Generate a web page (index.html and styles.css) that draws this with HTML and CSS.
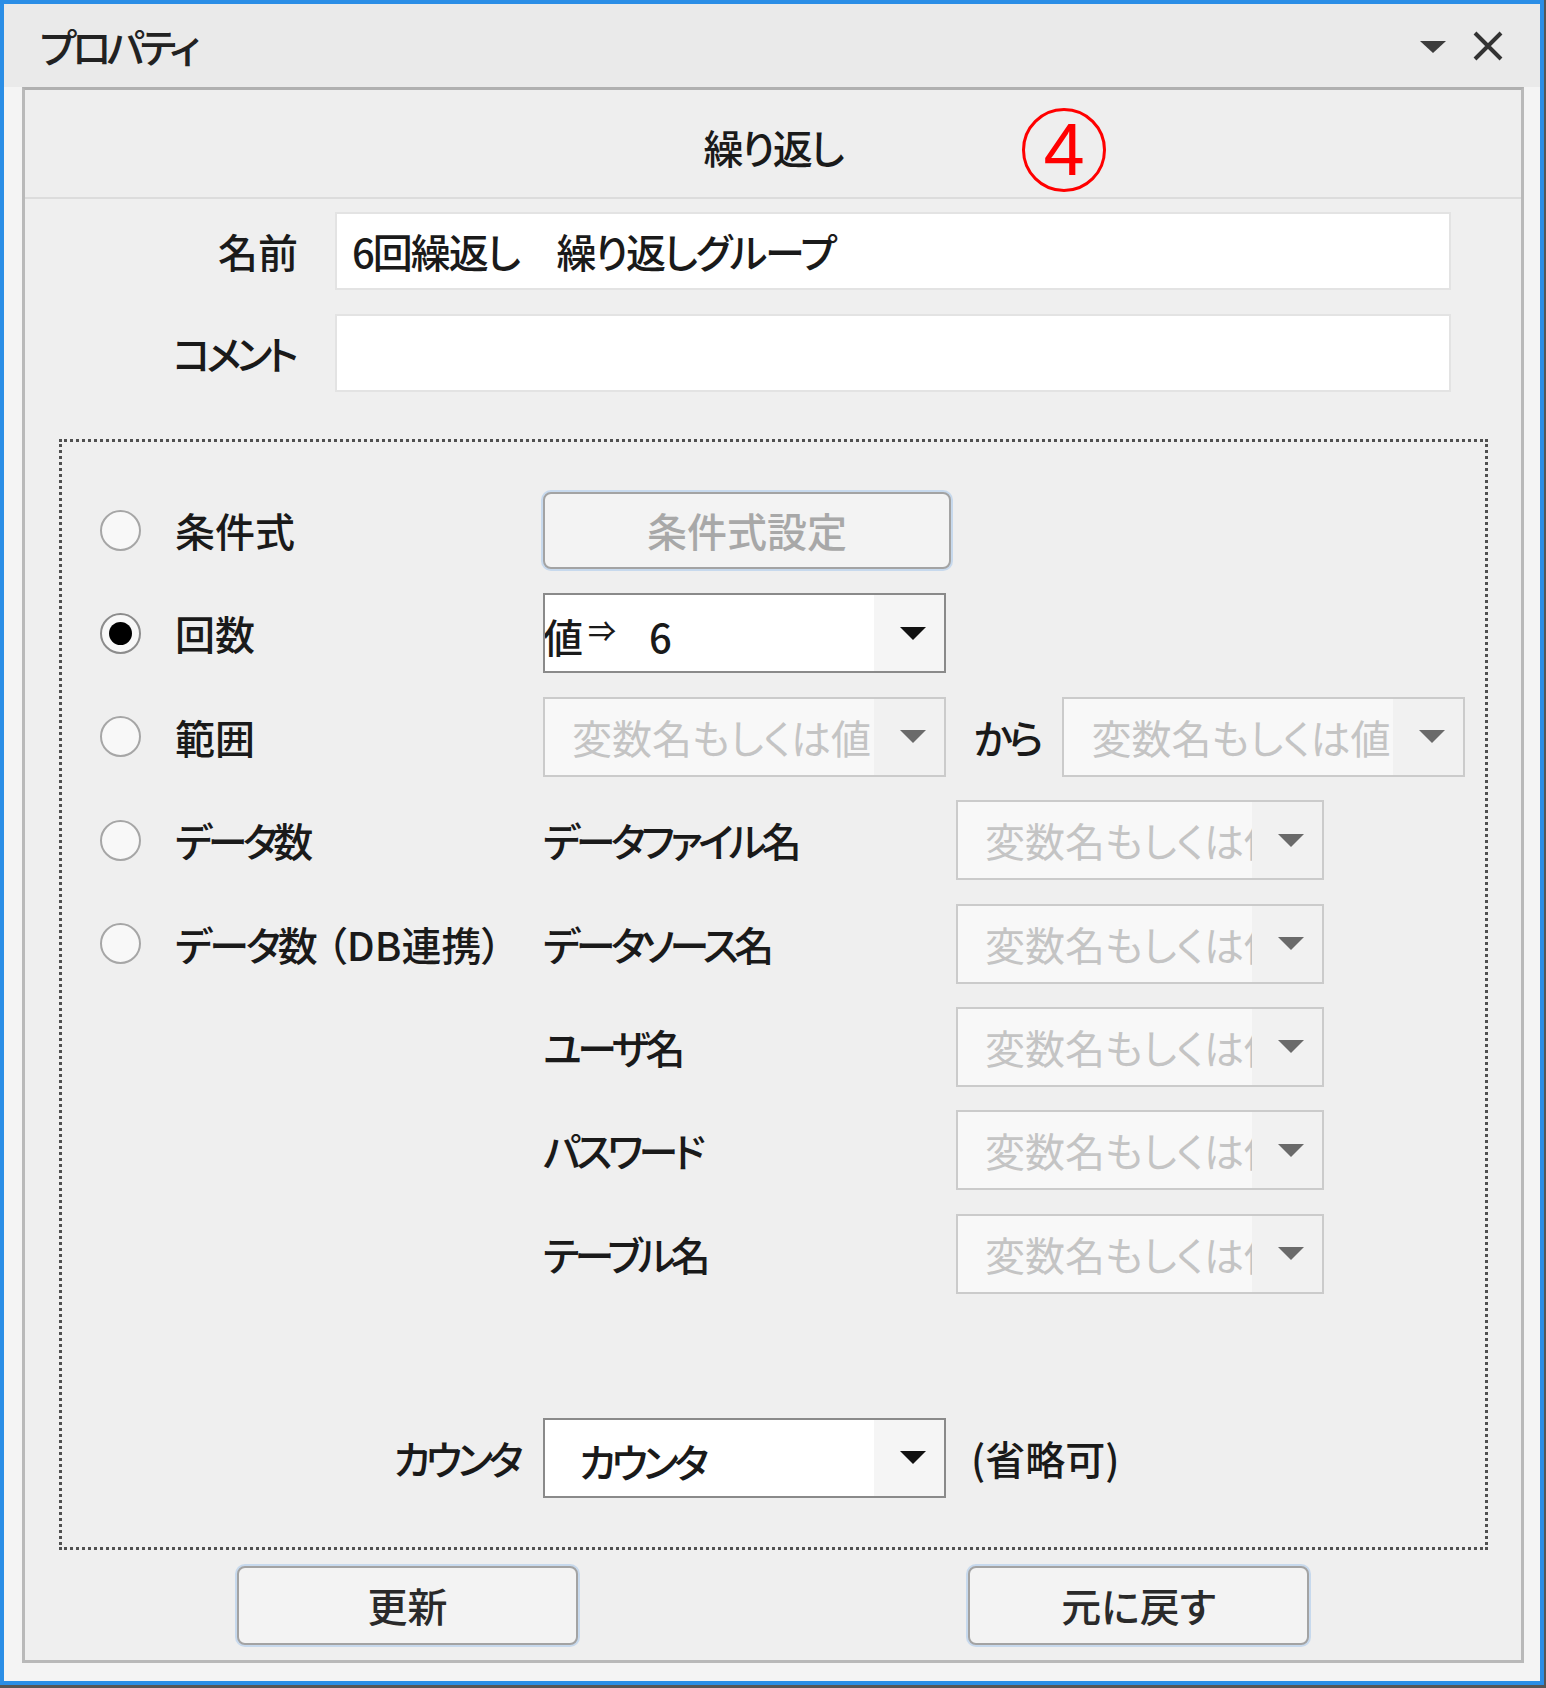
FILE: index.html
```html
<!DOCTYPE html>
<html lang="ja">
<head>
<meta charset="utf-8">
<title>プロパティ</title>
<link rel="stylesheet" href="styles.css">
</head>
<body>
<div class="window">
  <div class="titlebar">
    <span class="title kana">プロパティ</span>
    <div class="title-actions">
      <svg class="icon-menu" width="26" height="12" viewBox="0 0 26 12"><polygon points="0,0 26,0 13,12" fill="#3c3c3c"/></svg>
      <svg class="icon-close" width="32" height="30" viewBox="0 0 32 30"><path d="M3 2 L29 28 M29 2 L3 28" stroke="#333" stroke-width="4" fill="none"/></svg>
    </div>
  </div>
  <div class="body">
    <div class="panel">
      <div class="panel-header">
        <span class="header-title">繰り返し</span>
        <span class="annot">4</span>
      </div>
      <div class="field-row">
        <span class="field-label">名前</span>
        <div class="textbox">6回繰返し　繰り返しグループ</div>
      </div>
      <div class="field-row">
        <span class="field-label kana">コメント</span>
        <div class="textbox"></div>
      </div>

      <div class="loop-frame">
        <div class="row">
          <div class="radio-slot"><span class="radio"></span></div>
          <span class="opt-label">条件式</span>
          <button class="btn cond-btn" type="button">条件式設定</button>
        </div>
        <div class="row">
          <div class="radio-slot"><span class="radio checked"></span></div>
          <span class="opt-label">回数</span>
          <div class="combo w-main">
            <div class="combo-text value-text"><span class="val">値</span><span class="arrow">⇒</span><span class="num">6</span></div>
            <div class="combo-btn"><span class="tri"></span></div>
          </div>
        </div>
        <div class="row">
          <div class="radio-slot"><span class="radio"></span></div>
          <span class="opt-label">範囲</span>
          <div class="combo disabled w-main">
            <div class="combo-text placeholder">変数名もしくは値を</div>
            <div class="combo-btn"><span class="tri"></span></div>
          </div>
          <span class="kara">から</span>
          <div class="combo disabled w-main">
            <div class="combo-text placeholder">変数名もしくは値を</div>
            <div class="combo-btn"><span class="tri"></span></div>
          </div>
        </div>
        <div class="row">
          <div class="radio-slot"><span class="radio"></span></div>
          <span class="opt-label kana">データ数</span>
          <span class="data-label kana">データファイル名</span>
          <div class="combo disabled w-data">
            <div class="combo-text placeholder">変数名もしくは値</div>
            <div class="combo-btn"><span class="tri"></span></div>
          </div>
        </div>
        <div class="row">
          <div class="radio-slot"><span class="radio"></span></div>
          <span class="opt-label db-label"><span class="kana">データ</span>数<span class="paren">（</span>DB連携）</span>
          <span class="data-label kana">データソース名</span>
          <div class="combo disabled w-data">
            <div class="combo-text placeholder">変数名もしくは値</div>
            <div class="combo-btn"><span class="tri"></span></div>
          </div>
        </div>
        <div class="row">
          <div class="radio-slot"></div>
          <span class="opt-label"></span>
          <span class="data-label kana">ユーザ名</span>
          <div class="combo disabled w-data">
            <div class="combo-text placeholder">変数名もしくは値</div>
            <div class="combo-btn"><span class="tri"></span></div>
          </div>
        </div>
        <div class="row">
          <div class="radio-slot"></div>
          <span class="opt-label"></span>
          <span class="data-label kana">パスワード</span>
          <div class="combo disabled w-data">
            <div class="combo-text placeholder">変数名もしくは値</div>
            <div class="combo-btn"><span class="tri"></span></div>
          </div>
        </div>
        <div class="row">
          <div class="radio-slot"></div>
          <span class="opt-label"></span>
          <span class="data-label kana">テーブル名</span>
          <div class="combo disabled w-data">
            <div class="combo-text placeholder">変数名もしくは値</div>
            <div class="combo-btn"><span class="tri"></span></div>
          </div>
        </div>

        <div class="row counter-row">
          <span class="counter-label kana">カウンタ</span>
          <div class="combo w-main">
            <div class="combo-text counter-text kana">カウンタ</div>
            <div class="combo-btn"><span class="tri"></span></div>
          </div>
          <span class="optional">(省略可)</span>
        </div>
      </div>

      <div class="actions">
        <button class="btn action-btn" type="button">更新</button>
        <button class="btn action-btn" type="button">元に戻す</button>
      </div>
    </div>
  </div>
</div>
</body>
</html>
```
FILE: styles.css
```css
* { box-sizing: border-box; }

html, body {
  margin: 0;
  padding: 0;
}

body {
  width: 1546px;
  height: 1688px;
  background: #565656;
  font-family: "Noto Sans CJK JP", "Noto Sans", sans-serif;
  font-feature-settings: "palt";
  font-weight: 500;
  font-size: 40px;
  color: #1a1a1a;
}

/* Meiryo UI style condensed kana */
.kana { letter-spacing: -4.5px; }

.window {
  width: 1544px;
  height: 1685px;
  border: 4px solid #2b8ee6;
  background: #f4f4f4;
  display: flex;
  flex-direction: column;
}

/* title bar */
.titlebar {
  height: 83px;
  flex: none;
  background: #eaeaea;
  display: flex;
  align-items: center;
  justify-content: space-between;
  padding: 0 36px 0 36px;
}

.title {
  line-height: 1;
  color: #222;
}

.title-actions {
  display: flex;
  align-items: center;
  gap: 26px;
}

.icon-menu { display: block; margin-top: 2px; }
.icon-close { display: block; }

/* body */
.body {
  flex: 1;
  padding: 0 16px 18px 18px;
}

.panel {
  border: 3px solid #b9b9b9;
  border-top-color: #b0b0b0;
  background: #efefef;
  display: flex;
  flex-direction: column;
}

.panel-header {
  position: relative;
  height: 109px;
  padding-top: 7px;
  border-bottom: 2px solid #dcdcdc;
  display: flex;
  align-items: center;
  justify-content: center;
  background: #eeeeee;
}

.header-title {
  line-height: 1;
  letter-spacing: -2px;
}

.annot {
  position: absolute;
  left: 997px;
  top: 18px;
  width: 84px;
  height: 84px;
  border: 3px solid #ff0000;
  border-radius: 50%;
  color: #ff0000;
  font-family: "Liberation Sans", Arial, sans-serif;
  font-weight: 400;
  font-size: 74px;
  line-height: 78px;
  text-align: center;
}

/* name / comment */
.field-row {
  display: flex;
  align-items: center;
  height: 78px;
  margin-top: 13px;
}

.field-row + .field-row { margin-top: 24px; }

.field-label {
  width: 273px;
  flex: none;
  text-align: right;
  line-height: 1;
}

.field-label.kana { padding-right: 4px; }

.textbox {
  margin-left: 37px;
  width: 1116px;
  height: 78px;
  background: #ffffff;
  border: 2px solid #e3e3e3;
  padding-left: 15px;
  display: flex;
  align-items: center;
  white-space: pre;
  letter-spacing: -2px;
}

/* dotted frame */
.loop-frame {
  margin: 47px 0 0 34px;
  width: 1429px;
  border: 3px dotted #505050;
  padding: 48px 0 49px 38px;
  display: flex;
  flex-direction: column;
  gap: 23.4px;
}

.row {
  display: flex;
  align-items: center;
  height: 80px;
  white-space: nowrap;
}

.radio-slot {
  width: 75px;
  flex: none;
  display: flex;
  align-items: center;
}

.radio {
  width: 41px;
  height: 41px;
  border-radius: 50%;
  border: 2px solid #a6a6a6;
  background: #f8f8f8;
  display: flex;
  align-items: center;
  justify-content: center;
}

.radio.checked { border-color: #8c8c8c; }

.radio.checked::after {
  content: "";
  width: 23px;
  height: 23px;
  border-radius: 50%;
  background: #000;
}

.opt-label {
  width: 368px;
  flex: none;
  line-height: 1;
}

.db-label .kana { letter-spacing: -3px; }
.db-label .paren { margin-left: 9px; }

/* buttons */
.btn {
  font: inherit;
  font-feature-settings: "palt";
  border: 2px solid #a3a3a3;
  border-radius: 8px;
  background: #f3f3f3;
  box-shadow: 0 0 0 2px rgba(150, 190, 235, 0.45);
  padding: 0;
  line-height: 1;
  color: #2a2a2a;
}

.cond-btn {
  width: 408px;
  height: 77px;
  color: #a8a8a8;
}

/* combos */
.combo {
  display: flex;
  height: 80px;
  border: 2px solid #8a8a8a;
  background: #ffffff;
  flex: none;
}

.combo.disabled {
  border-color: #cbcbcb;
  background: #f8f8f8;
}

.w-main { width: 403px; }
.w-data { width: 368px; }

.combo-text {
  flex: 1;
  min-width: 0;
  overflow: hidden;
  white-space: nowrap;
  display: flex;
  align-items: center;
  line-height: 1;
}

.combo-text.placeholder {
  color: #c4c4c4;
  padding-left: 27px;
  font-weight: 400;
}

.combo-btn {
  width: 70px;
  flex: none;
  background: #f5f5f5;
  display: flex;
  align-items: center;
  justify-content: center;
  padding-left: 8px;
}

.combo.disabled .combo-btn { background: #f1f1f1; }

.tri {
  width: 0;
  height: 0;
  border-left: 13px solid transparent;
  border-right: 13px solid transparent;
  border-top: 13px solid #111;
}

.combo.disabled .tri { border-top-color: #6a6a6a; }

.value-text { padding-top: 6px; }

.val { margin-left: -2px; }

.arrow {
  font-size: 28px;
  margin-left: 5px;
  transform: translateY(-6px);
}

.num { margin-left: 33px; }

.kara {
  margin: 0 23px 0 28px;
  line-height: 1;
  letter-spacing: -4px;
}

.data-label {
  width: 413px;
  flex: none;
  line-height: 1;
}

/* counter */
.counter-row { margin-top: 100.6px; }

.counter-label {
  width: 443px;
  flex: none;
  text-align: right;
  padding-right: 24px;
  line-height: 1;
}

.counter-text { padding-left: 34px; padding-top: 6px; }

.optional {
  margin-left: 25px;
  line-height: 1;
}

/* action buttons */
.actions {
  display: flex;
  justify-content: center;
  gap: 390px;
  margin-top: 16px;
  padding-bottom: 15px;
}

.action-btn {
  width: 341px;
  height: 79px;
}
```
